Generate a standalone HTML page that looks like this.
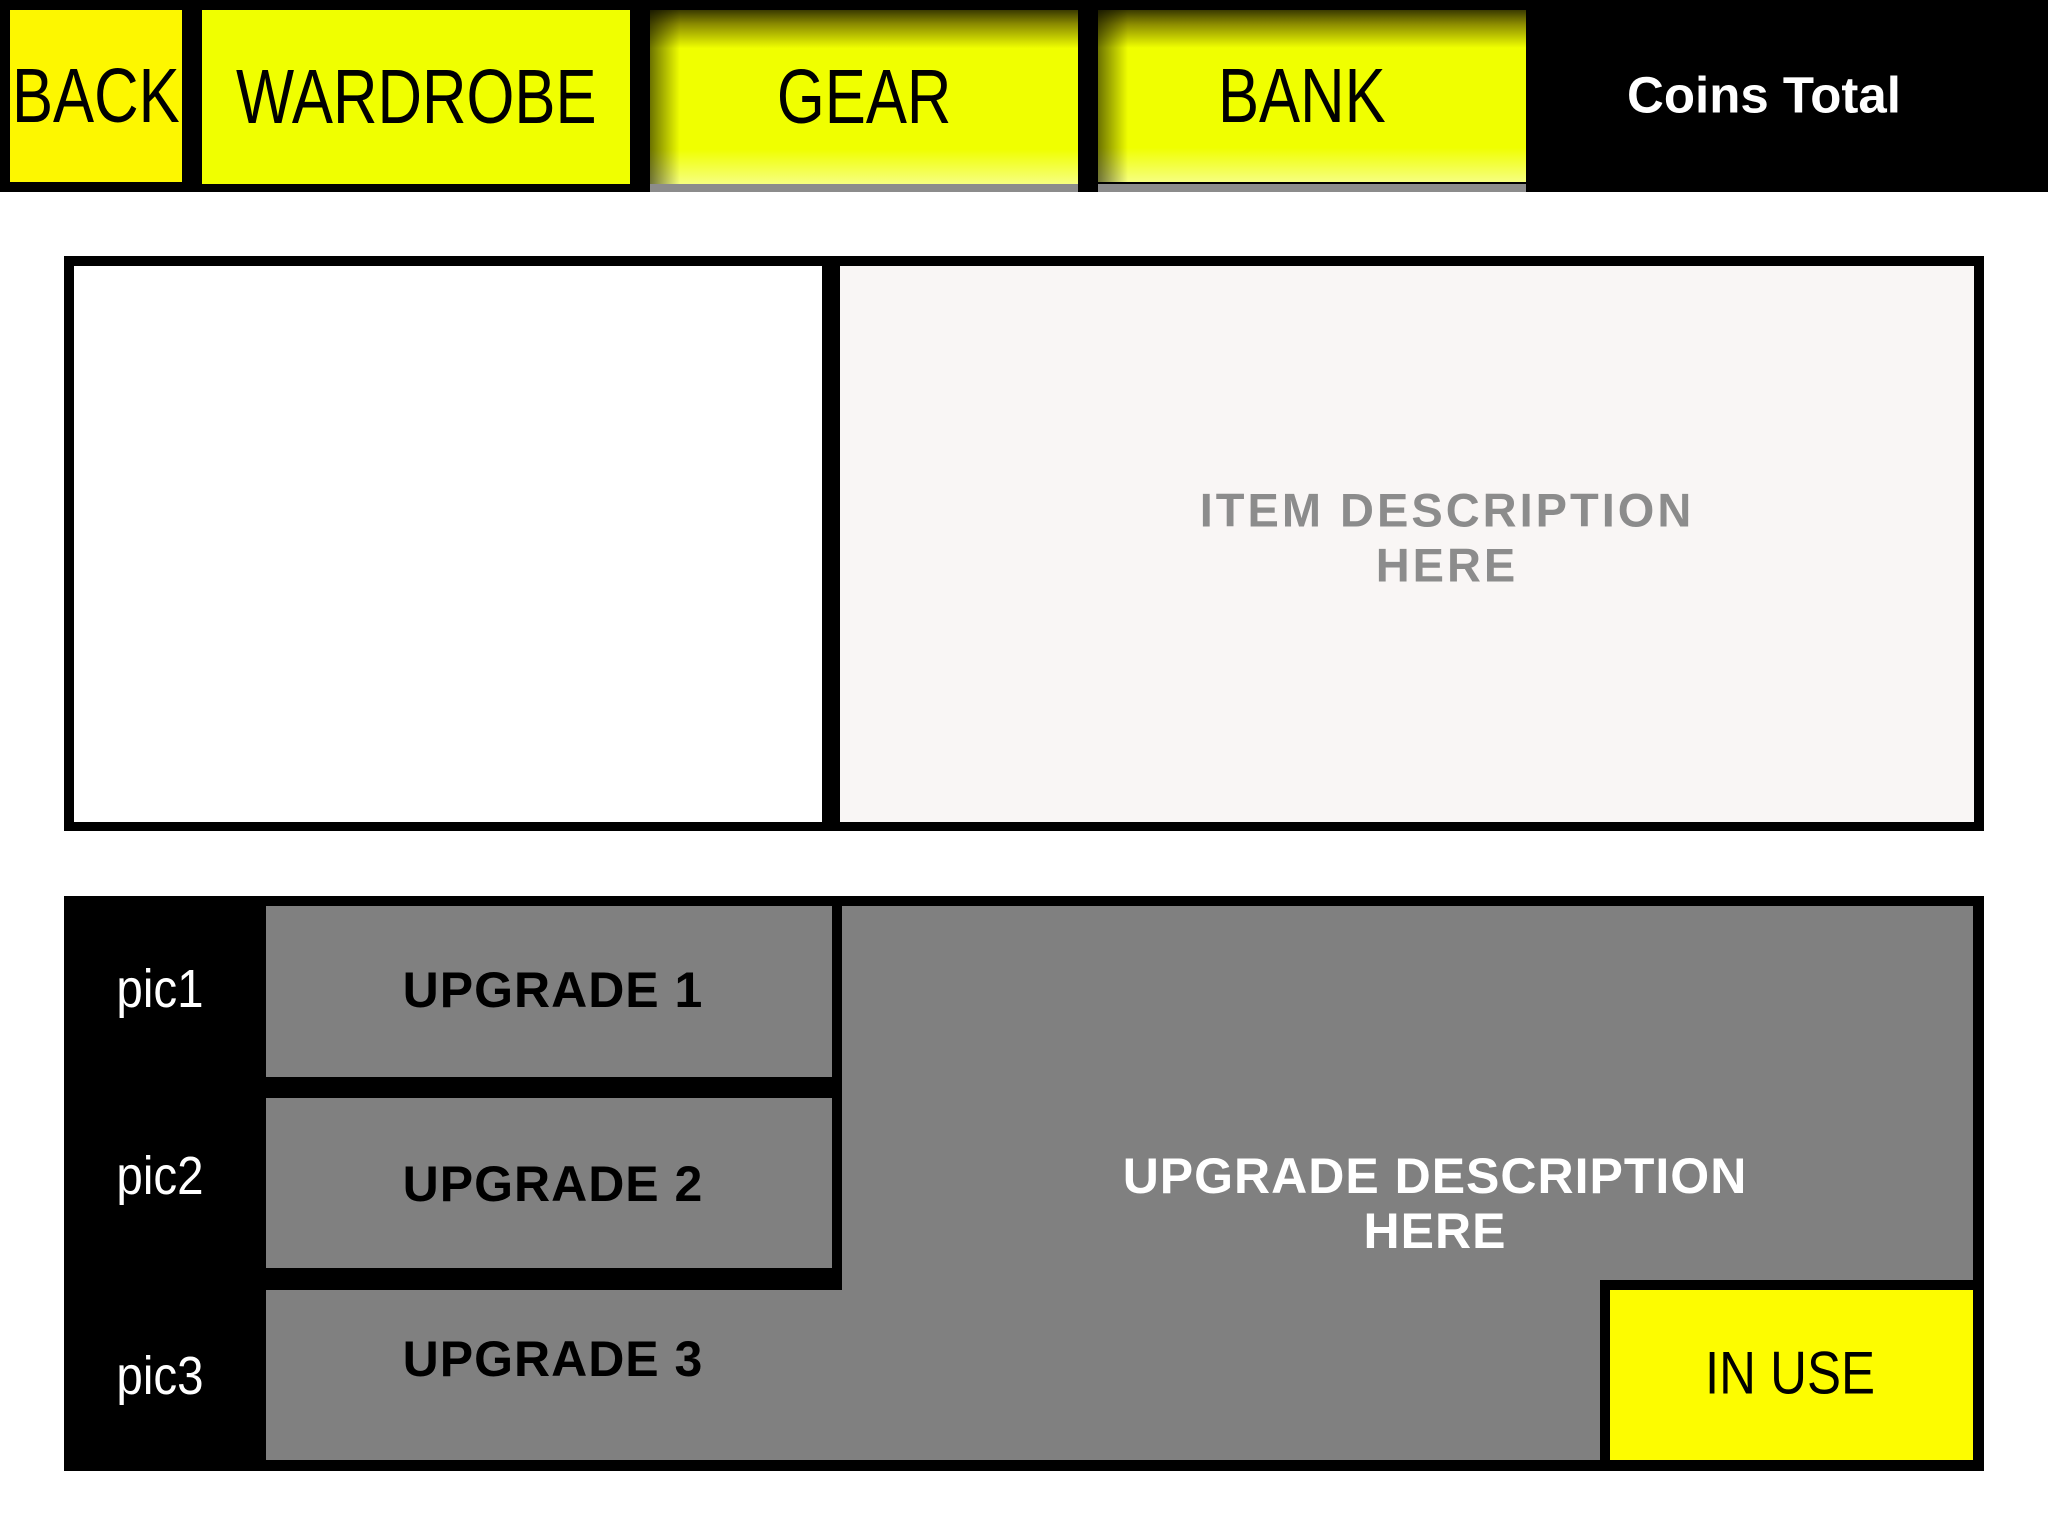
<!DOCTYPE html>
<html><head><meta charset="utf-8"><style>
*{margin:0;padding:0;box-sizing:border-box}
body{width:2048px;height:1536px;background:#fff;position:relative;overflow:hidden;font-family:"Liberation Sans",sans-serif}
.a{position:absolute}
.t{position:absolute;white-space:nowrap;transform:translate(-50%,-50%)}
.btn{position:absolute;display:flex;align-items:center;justify-content:center}
.btn span{font-size:77px;color:#000;transform:scaleX(.8);white-space:nowrap}
.gy{background:#808080}
.gl{background:linear-gradient(to bottom,#3a3a00 0%,#8a8a00 8%,#f0ff00 22%,#f0ff00 80%,#f6ff80 100%)}
.sh{background:linear-gradient(to right,rgba(0,0,0,.55),rgba(0,0,0,0) 30px)}
</style></head><body>
<div class="a" style="left:0;top:0;width:2048px;height:192px;background:#000"></div>
<div class="a" style="left:650px;top:184px;width:428px;height:8px;background:#8c8c8c"></div>
<div class="a" style="left:1098px;top:184px;width:428px;height:8px;background:#8c8c8c"></div>
<div class="btn" style="left:10px;top:10px;width:172px;height:172px;background:#fdf700"><span>BACK</span></div>
<div class="btn" style="left:202px;top:10px;width:428px;height:174px;background:#f0ff00"><span>WARDROBE</span></div>
<div class="btn gl" style="left:650px;top:10px;width:428px;height:174px"><div class="a sh" style="left:0;top:0;width:100%;height:100%"></div><span style="position:relative">GEAR</span></div>
<div class="btn gl" style="left:1098px;top:10px;width:428px;height:172px"><div class="a sh" style="left:0;top:0;width:100%;height:100%"></div><span style="position:relative;left:-10px">BANK</span></div>
<div class="t" style="left:1764px;top:95px;color:#fff;font-weight:bold;font-size:51px">Coins Total</div>

<div class="a" style="left:64px;top:256px;width:1920px;height:575px;background:#000"></div>
<div class="a" style="left:74px;top:266px;width:748px;height:556px;background:#fff"></div>
<div class="a" style="left:840px;top:266px;width:1134px;height:556px;background:#f9f6f5"></div>
<div class="t" style="left:1447px;top:510px;color:#8c8c8c;font-weight:bold;font-size:47px;letter-spacing:3px">ITEM DESCRIPTION</div>
<div class="t" style="left:1447px;top:565px;color:#8c8c8c;font-weight:bold;font-size:47px;letter-spacing:3px">HERE</div>

<div class="a" style="left:64px;top:896px;width:1920px;height:575px;background:#000"></div>
<div class="a gy" style="left:266px;top:906px;width:566px;height:171px"></div>
<div class="a gy" style="left:266px;top:1098px;width:566px;height:170px"></div>
<div class="a gy" style="left:842px;top:906px;width:1131px;height:374px"></div>
<div class="a gy" style="left:842px;top:1270px;width:758px;height:190px"></div>
<div class="a gy" style="left:266px;top:1290px;width:1334px;height:170px"></div>
<div class="a" style="left:1610px;top:1290px;width:363px;height:170px;background:#fdfc00"></div>
<div class="t" style="left:160px;top:989px;color:#fff;font-size:54px;transform:translate(-50%,-50%) scaleX(.88)">pic1</div>
<div class="t" style="left:160px;top:1176px;color:#fff;font-size:54px;transform:translate(-50%,-50%) scaleX(.88)">pic2</div>
<div class="t" style="left:160px;top:1376px;color:#fff;font-size:54px;transform:translate(-50%,-50%) scaleX(.88)">pic3</div>
<div class="t" style="left:553px;top:990px;font-weight:bold;font-size:50px;letter-spacing:1px">UPGRADE 1</div>
<div class="t" style="left:553px;top:1184px;font-weight:bold;font-size:50px;letter-spacing:1px">UPGRADE 2</div>
<div class="t" style="left:553px;top:1359px;font-weight:bold;font-size:50px;letter-spacing:1px">UPGRADE 3</div>
<div class="t" style="left:1435px;top:1176px;color:#fff;font-weight:bold;font-size:50px;letter-spacing:1px">UPGRADE DESCRIPTION</div>
<div class="t" style="left:1435px;top:1231px;color:#fff;font-weight:bold;font-size:50px;letter-spacing:1px">HERE</div>
<div class="t" style="left:1790px;top:1373px;font-size:60px;transform:translate(-50%,-50%) scaleX(.85)">IN USE</div>
</body></html>
